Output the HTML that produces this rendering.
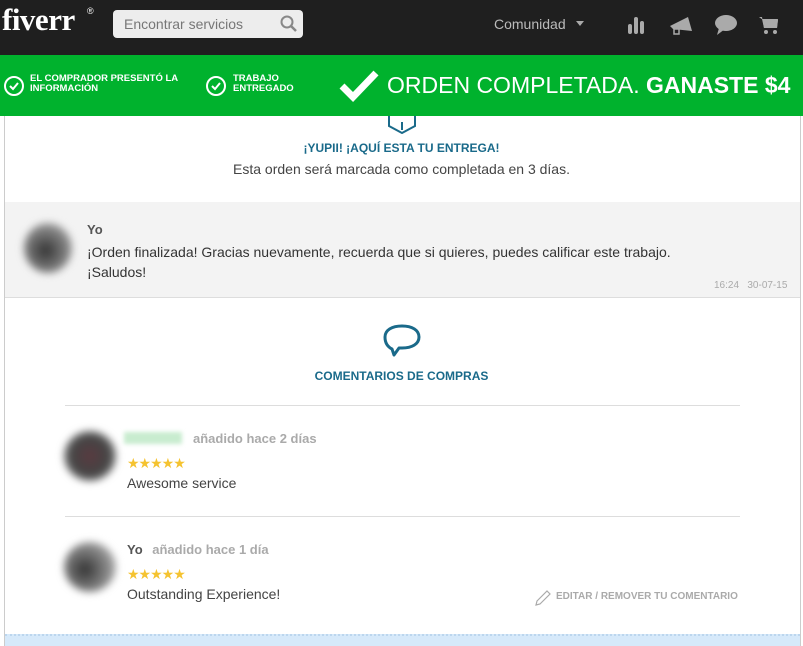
<!DOCTYPE html>
<html><head><meta charset="utf-8"><style>
*{margin:0;padding:0;box-sizing:border-box}
body{width:803px;height:646px;overflow:hidden;background:#fff;font-family:"Liberation Sans",Arial,sans-serif;position:relative}
.a{position:absolute}
.hdr{left:0;top:0;width:803px;height:55px;background:#1f1f1f}
.grn{left:0;top:55px;width:803px;height:61px;background:#00b22d;color:#fff}
.card{left:4px;top:116px;width:797px;height:530px;border-left:1px solid #ccc;border-right:1px solid #ccc;background:#fff}
.av{border-radius:50%;filter:blur(4px)}
.star{color:#f5c330;font-size:14px;letter-spacing:-1px}
</style></head><body>
<div class="a hdr"></div>
<div class="a" style="left:2px;top:2px;color:#fff;font:bold 31px 'Liberation Serif',serif;letter-spacing:-0.5px">fiverr</div>
<div class="a" style="left:87px;top:6px;color:#fff;font-size:9px">®</div>
<div class="a" style="left:113px;top:10px;width:190px;height:28px;background:#ededed;border-radius:4px"></div>
<div class="a" style="left:124px;top:16px;color:#777;font-size:14px">Encontrar servicios</div>
<svg class="a" style="left:280px;top:15px" width="18" height="18"><circle cx="7" cy="7" r="5.5" fill="none" stroke="#888" stroke-width="2"/><line x1="11" y1="11" x2="16" y2="16" stroke="#888" stroke-width="2.5"/></svg>
<div class="a" style="left:494px;top:16px;color:#bbb;font-size:14px">Comunidad</div>
<div class="a" style="left:576px;top:21px;width:0;height:0;border-left:4px solid transparent;border-right:4px solid transparent;border-top:5px solid #aaa"></div>
<svg class="a" style="left:627px;top:14px" width="20" height="22"><rect x="1" y="10" width="4" height="10" rx="2" fill="#aaa"/><rect x="7" y="3" width="4" height="17" rx="2" fill="#aaa"/><rect x="13" y="7" width="4" height="13" rx="2" fill="#aaa"/></svg>
<svg class="a" style="left:668px;top:14px" width="26" height="22"><path d="M2 12 L20 3 L24 17 L5 15 Z" fill="#aaa"/><rect x="6" y="15" width="5" height="5" fill="none" stroke="#aaa" stroke-width="1.5"/></svg>
<svg class="a" style="left:714px;top:14px" width="24" height="22"><ellipse cx="12" cy="9" rx="11" ry="8" fill="#aaa"/><path d="M5 14 L3 21 L11 15 Z" fill="#aaa"/></svg>
<svg class="a" style="left:758px;top:14px" width="22" height="22"><path d="M1 3 L4 3 L6 14 L19 14 L20 6 L5 6" fill="#aaa"/><path d="M4 5 L20 5 L19 14 L6 14 Z" fill="#aaa"/><circle cx="8" cy="18" r="2" fill="#aaa"/><circle cx="17" cy="18" r="2" fill="#aaa"/></svg>
<div class="a grn"></div>
<svg class="a" style="left:3px;top:75px" width="22" height="22"><circle cx="11" cy="11" r="9" fill="none" stroke="#fff" stroke-width="2"/><path d="M7 11 L10 14 L15 8" fill="none" stroke="#fff" stroke-width="2"/></svg>
<div class="a" style="left:30px;top:74px;color:#fff;font:bold 9.5px/10px 'Liberation Sans',sans-serif">EL COMPRADOR PRESENTÓ LA<br>INFORMACIÓN</div>
<svg class="a" style="left:205px;top:75px" width="22" height="22"><circle cx="11" cy="11" r="9" fill="none" stroke="#fff" stroke-width="2"/><path d="M7 11 L10 14 L15 8" fill="none" stroke="#fff" stroke-width="2"/></svg>
<div class="a" style="left:233px;top:74px;color:#fff;font:bold 9.5px/10px 'Liberation Sans',sans-serif">TRABAJO<br>ENTREGADO</div>
<svg class="a" style="left:338px;top:68px" width="42" height="34"><path d="M4 18 L15 29 L38 5" fill="none" stroke="#fff" stroke-width="7"/></svg>
<div class="a" style="left:387px;top:72px;color:#fff;font-size:23px;white-space:nowrap">ORDEN COMPLETADA. <b style="font-weight:900">GANASTE $4</b></div>
<div class="a card"></div>
<svg class="a" style="left:387px;top:112px" width="30" height="22"><path d="M2 4 L2 14 L15 21 L28 14 L28 4 M15 10 L15 18" fill="none" stroke="#1a6a8a" stroke-width="2"/></svg>
<div class="a" style="left:0;width:803px;top:141px;text-align:center;color:#1a6a8a;font-weight:bold;font-size:12px">¡YUPII! ¡AQUÍ ESTA TU ENTREGA!</div>
<div class="a" style="left:0;width:803px;top:161px;text-align:center;color:#444;font-size:14px">Esta orden será marcada como completada en 3 días.</div>
<div class="a" style="left:5px;top:202px;width:795px;height:96px;background:#f3f3f3;border-bottom:1px solid #ddd"></div>
<div class="a av" style="left:24px;top:223px;width:48px;height:50px;background:radial-gradient(circle at 45% 55%,#333,#888 60%,#ddd)"></div>
<div class="a" style="left:87px;top:222px;color:#555;font-weight:bold;font-size:13px">Yo</div>
<div class="a" style="left:87px;top:242px;color:#333;font-size:14px;line-height:20px">¡Orden finalizada! Gracias nuevamente, recuerda que si quieres, puedes calificar este trabajo.<br>¡Saludos!</div>
<div class="a" style="left:714px;top:280px;color:#aaa;font-size:10px">16:24 &nbsp; 30-07-15</div>
<svg class="a" style="left:383px;top:323px" width="38" height="36"><path d="M9 26 C3 23 2 18 2 14 C2 7 9 3 19 3 C29 3 36 7 36 14 C36 21 29 25 19 25 L16 25 L11 32 Z" fill="none" stroke="#1a6a8a" stroke-width="3" stroke-linejoin="round"/></svg>
<div class="a" style="left:0;width:803px;top:369px;text-align:center;color:#1a6a8a;font-weight:bold;font-size:12px">COMENTARIOS DE COMPRAS</div>
<div class="a" style="left:65px;top:405px;width:675px;height:1px;background:#ddd"></div>
<div class="a av" style="left:64px;top:431px;width:52px;height:50px;background:radial-gradient(circle at 50% 50%,#5a3a40,#444 50%,#bbb)"></div>
<div class="a" style="left:124px;top:432px;width:58px;height:12px;background:#c8eccf;filter:blur(2px)"></div>
<div class="a" style="left:193px;top:431px;color:#aaa;font-weight:bold;font-size:13px">añadido hace 2 días</div>
<div class="a star" style="left:127px;top:455px">★★★★★</div>
<div class="a" style="left:127px;top:475px;color:#444;font-size:14px">Awesome service</div>
<div class="a" style="left:65px;top:516px;width:675px;height:1px;background:#ddd"></div>
<div class="a av" style="left:64px;top:542px;width:52px;height:50px;background:radial-gradient(circle at 40% 55%,#333,#888 55%,#ddd)"></div>
<div class="a" style="left:127px;top:542px;color:#555;font-weight:bold;font-size:13px">Yo <span style="color:#aaa;margin-left:6px">añadido hace 1 día</span></div>
<div class="a star" style="left:127px;top:566px">★★★★★</div>
<div class="a" style="left:127px;top:586px;color:#444;font-size:14px">Outstanding Experience!</div>
<svg class="a" style="left:534px;top:589px" width="18" height="18"><path d="M2 16 L3 12 L13 2 L16 5 L6 15 Z" fill="none" stroke="#aaa" stroke-width="1.2"/></svg>
<div class="a" style="left:556px;top:591px;color:#aaa;font-weight:bold;font-size:10px">EDITAR / REMOVER TU COMENTARIO</div>
<div class="a" style="left:5px;top:634px;width:795px;height:12px;background:#d6e9fa;border-top:2px dotted #bcd6ee"></div>
</body></html>
